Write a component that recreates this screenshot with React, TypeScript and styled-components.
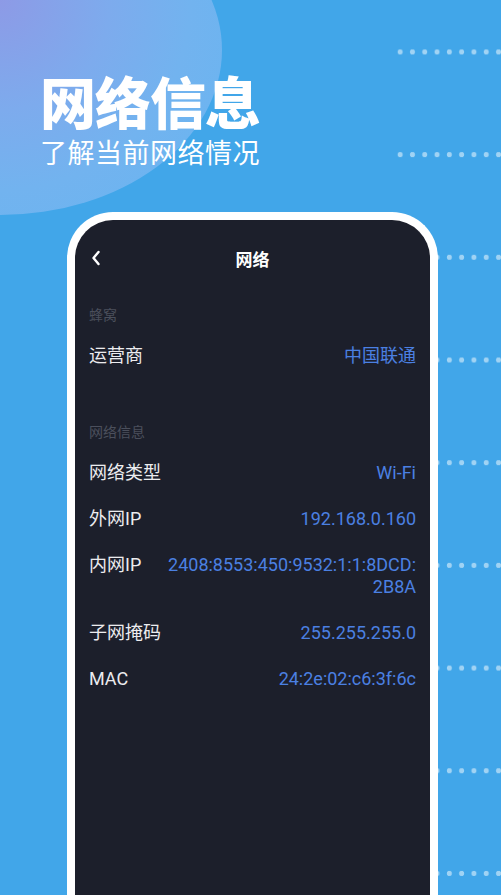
import React from 'react';
import styled, {createGlobalStyle} from 'styled-components';

const GlobalStyle = createGlobalStyle`
  html, body {
    margin: 0;
    padding: 0;
  }
  body {
    font-family: Roboto, "Noto Sans CJK SC", sans-serif;
    background: #41a6e9;
  }
`

type Item = { label: string; value: React.ReactNode }

const cellular: Item[] = [
    {label: '运营商', value: '中国联通'},
]

const network: Item[] = [
    {label: '网络类型', value: 'Wi-Fi'},
    {label: '外网IP', value: '192.168.0.160'},
    {label: '内网IP', value: <>2408:8553:450:9532:1:1:8DCD:<wbr/>2B8A</>},
    {label: '子网掩码', value: '255.255.255.0'},
    {label: 'MAC', value: '24:2e:02:c6:3f:6c'},
]

const App = () => {
    return (
        <StyledPage>
            <GlobalStyle/>
            <Glow/>
            <Dots/>

            <Header>
                <Title>网络信息</Title>
                <Subtitle>了解当前网络情况</Subtitle>
            </Header>

            <Phone>
                <Screen>
                    <NavBar>
                        <BackButton>
                            <svg width="10" height="16" viewBox="0 0 10 16">
                                <path d="M7.5 2 L2.5 8 L7.5 14" fill="none" stroke="#fff" strokeWidth="2.4"
                                      strokeLinecap="round" strokeLinejoin="round"/>
                            </svg>
                        </BackButton>
                        <NavTitle>网络</NavTitle>
                    </NavBar>

                    <Section>
                        <SectionTitle>蜂窝</SectionTitle>
                        {cellular.map(item => (
                            <Row key={item.label}>
                                <Label>{item.label}</Label>
                                <Value>{item.value}</Value>
                            </Row>
                        ))}
                    </Section>

                    <Section>
                        <SectionTitle>网络信息</SectionTitle>
                        {network.map(item => (
                            <Row key={item.label}>
                                <Label>{item.label}</Label>
                                <Value>{item.value}</Value>
                            </Row>
                        ))}
                    </Section>
                </Screen>
            </Phone>
        </StyledPage>
    );
};

const StyledPage = styled.div`
  position: relative;
  width: 501px;
  height: 895px;
  overflow: hidden;
  background-color: #41a6e9;
  display: flex;
  flex-direction: column;
`

const Glow = styled.div`
  position: absolute;
  left: -222px;
  top: -115px;
  width: 444px;
  height: 330px;
  border-radius: 50%;
  background: radial-gradient(circle at 222px 115px, #8d9ae6 0, #7dabed 110px, #72b3ef 190px, #6db4f0 240px);
`

const Dots = styled.div`
  position: absolute;
  top: 0;
  left: 394px;
  right: 0;
  bottom: 0;
  background-image: radial-gradient(circle, rgba(255, 255, 255, 0.5) 2.4px, transparent 2.9px);
  background-size: 12.3px 102.7px;
  background-position: 0 0.6px;
`

const Header = styled.div`
  position: relative;
  padding: 75px 0 0 40px;
  color: #fff;
`

const Title = styled.h1`
  margin: 0;
  font-family: "Noto Sans CJK SC", sans-serif;
  font-size: 56px;
  line-height: 50px;
  font-weight: 900;
  letter-spacing: -1px;
`

const Subtitle = styled.p`
  margin: 13px 0 0;
  font-family: "Noto Sans CJK SC", sans-serif;
  font-size: 27px;
  line-height: 1;
  font-weight: 400;
  letter-spacing: 0.5px;
`

const Phone = styled.div`
  position: relative;
  margin: 47px 0 0 67px;
  width: 371px;
  flex: 1;
  box-sizing: border-box;
  border: 8px solid #fff;
  border-bottom: none;
  border-radius: 46px 46px 0 0;
  background: #1c1f2b;
  overflow: hidden;
`

const Screen = styled.div`
  padding: 0 14px;
  color: #ececef;
`

const NavBar = styled.div`
  position: relative;
  height: 76px;
  display: flex;
  align-items: center;
  justify-content: center;
`

const BackButton = styled.div`
  position: absolute;
  left: 2px;
  top: 30px;
  display: flex;
`

const NavTitle = styled.div`
  font-family: "Noto Sans CJK SC", sans-serif;
  font-size: 17px;
  font-weight: 700;
  color: #fff;
`

const Section = styled.div`
  padding-top: 8px;

  & + & {
    padding-top: 42px;
  }
`

const SectionTitle = styled.div`
  font-family: "Noto Sans CJK SC", sans-serif;
  font-size: 14px;
  line-height: 20px;
  color: #4b4f5c;
  margin-bottom: 9px;
`

const Row = styled.div`
  display: flex;
  justify-content: space-between;
  align-items: flex-start;
  padding: 12px 0;
  font-size: 18px;
  line-height: 22px;
`

const Label = styled.div`
  flex-shrink: 0;
  color: #ececef;
`

const Value = styled.div`
  flex: 1;
  min-width: 0;
  margin-left: 20px;
  text-align: right;
  color: #4b80e2;
`

export default App;
